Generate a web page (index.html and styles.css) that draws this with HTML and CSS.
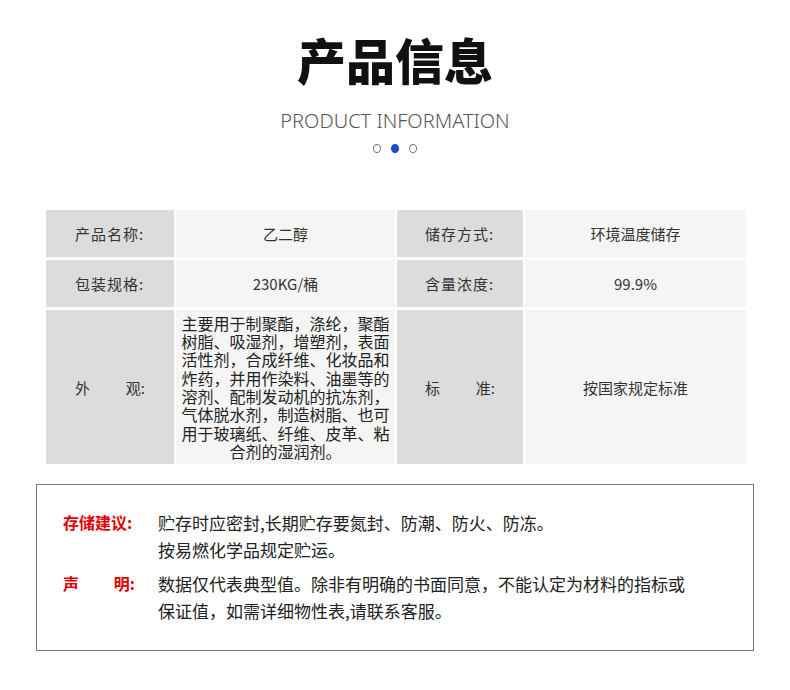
FILE: index.html
```html
<!DOCTYPE html>
<html lang="zh-CN">
<head>
  <meta charset="UTF-8" />
  <meta name="viewport" content="width=device-width, initial-scale=1.0"/>
  <title>产品信息</title>
  <link rel="stylesheet" href="styles.css">
</head>
<body>

<div class="entete">
  <h1>产品信息</h1>
  <p class="sous-titre">PRODUCT INFORMATION</p>
  <div class="points">
    <span class="point"></span>
    <span class="point actif"></span>
    <span class="point"></span>
  </div>
</div>

<div class="fiche">
  <div class="lib"><span class="etiq">产品名称:</span></div>
  <div class="val">乙二醇</div>
  <div class="lib"><span class="etiq">储存方式:</span></div>
  <div class="val">环境温度储存</div>

  <div class="lib"><span class="etiq">包装规格:</span></div>
  <div class="val">230KG/桶</div>
  <div class="lib"><span class="etiq">含量浓度:</span></div>
  <div class="val">99.9%</div>

  <div class="lib"><span class="etiq ecart"><span>外</span><span>观:</span></span></div>
  <div class="val desc">主要用于制聚酯，涤纶，聚酯<br>树脂、吸湿剂，增塑剂，表面<br>活性剂，合成纤维、化妆品和<br>炸药，并用作染料、油墨等的<br>溶剂、配制发动机的抗冻剂，<br>气体脱水剂，制造树脂、也可<br>用于玻璃纸、纤维、皮革、粘<br>合剂的湿润剂。</div>
  <div class="lib"><span class="etiq ecart"><span>标</span><span>准:</span></span></div>
  <div class="val">按国家规定标准</div>
</div>

<div class="remarque">
  <div class="ligne">
    <span class="titre">存储建议:</span>
    <p>贮存时应密封,长期贮存要氮封、防潮、防火、防冻。<br>按易燃化学品规定贮运。</p>
  </div>
  <div class="ligne">
    <span class="titre ecart"><span>声</span><span>明:</span></span>
    <p>数据仅代表典型值。除非有明确的书面同意，不能认定为材料的指标或<br>保证值，如需详细物性表,请联系客服。</p>
  </div>
</div>

</body>
</html>
```

FILE: styles.css
```css
body {
  margin: 0;
  background: #fff;
  font-family: "Noto Sans CJK SC", "Noto Sans", sans-serif;
  color: #333;
}
.entete {
  text-align: center;
  padding-top: 24px;
}
h1 {
  margin: 0;
  font-size: 49px;
  line-height: 70px;
  font-weight: 900;
  color: #111;
}
.sous-titre {
  margin: 14px 0 0;
  font-family: "Noto Sans", sans-serif;
  font-size: 20px;
  line-height: 26px;
  color: #555;
  font-weight: 300;
}
.points {
  display: flex;
  justify-content: center;
  gap: 10px;
  margin-top: 10px;
  height: 9px;
}
.point {
  width: 6px;
  height: 7px;
  border: 1.5px solid #777;
  border-radius: 50%;
}
.point.actif {
  background: #1650c8;
  border-color: #1650c8;
}
.fiche {
  display: grid;
  grid-template-columns: 128px 219px 126px 221px;
  grid-template-rows: 47px 47px 154px;
  column-gap: 2px;
  row-gap: 3px;
  width: 700px;
  margin: 57px 0 0 46px;
  font-size: 15px;
}
.lib, .val {
  display: flex;
  align-items: center;
  justify-content: center;
}
.lib {
  background: #dcdcdc;
}
.val {
  background: #f5f5f5;
  text-align: center;
}
.etiq {
  width: 70px;
  letter-spacing: 1px;
}
.ecart {
  display: flex;
  justify-content: space-between;
  letter-spacing: 0;
}
.desc {
  font-size: 16px;
  line-height: 18.3px;
  color: #222;
}
.remarque {
  box-sizing: border-box;
  width: 718px;
  margin: 20px 0 0 36px;
  border: 1px solid #777;
  padding: 24px 26px 26px;
  color: #222;
  font-size: 17px;
  line-height: 27px;
}
.ligne {
  display: flex;
}
.ligne + .ligne {
  margin-top: 7px;
}
.titre {
  width: 72px;
  flex: none;
  margin-right: 23px;
  color: #e60000;
  font-weight: bold;
  font-size: 16px;
}
.ligne p {
  margin: 0;
}
```
